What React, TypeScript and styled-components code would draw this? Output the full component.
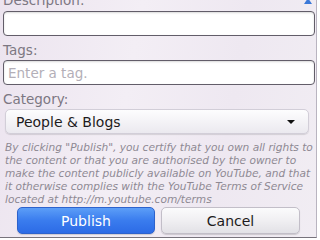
import React from "react";
import styled, { createGlobalStyle } from "styled-components";

const GlobalStyle = createGlobalStyle`
  html, body {
    margin: 0;
    padding: 0;
    background: #ffffff;
  }
  body {
    font-family: "DejaVu Sans", "Liberation Sans", sans-serif;
  }
`;

const Screen = styled.div`
  position: relative;
  width: 316px;
  height: 237px;
  overflow: hidden;
  background: linear-gradient(100deg, #ece4ef 0%, #f3eef5 40%, #eee8f1 70%, #f1edf3 100%);
  border-right: 1px solid #b9b4c0;
  border-bottom: 1px solid #77737c;
`;

const ScrollArrow = styled.div`
  position: absolute;
  top: -2px;
  right: 4px;
  width: 0;
  height: 0;
  border-left: 4px solid transparent;
  border-right: 4px solid transparent;
  border-bottom: 6px solid #3a78d8;
`;

const Form = styled.div`
  display: flex;
  flex-direction: column;
  padding: 0 1px 0 3px;
`;

const Label = styled.div<{ $first?: boolean }>`
  margin-top: ${({ $first }) => ($first ? "-8px" : "6px")};
  margin-bottom: ${({ $first }) => ($first ? "3px" : "2px")};
  font-size: 13.5px;
  line-height: 16px;
  color: #7c7782;
`;

const TextInput = styled.div`
  height: 23px;
  box-sizing: content-box;
  border: 1px solid #625d69;
  border-radius: 4px;
  background: #ffffff;
  box-shadow: inset 0 1px 2px rgba(0, 0, 0, 0.15);
  padding: 0 4px;
  font-size: 13.5px;
  line-height: 24px;
  color: #b3afb8;
`;

const Select = styled.div`
  margin: 0 6px 0 2px;
  height: 23px;
  box-sizing: content-box;
  display: flex;
  align-items: center;
  justify-content: space-between;
  padding: 0 13px 0 10px;
  border: 1px solid #d2ced8;
  border-radius: 5px;
  background: linear-gradient(#fdfdfe, #ebe9ef);
  box-shadow: 0 1px 1px rgba(0, 0, 0, 0.12);
  font-size: 14px;
  color: #1d1b20;
`;

const Caret = styled.span`
  width: 0;
  height: 0;
  border-left: 4px solid transparent;
  border-right: 4px solid transparent;
  border-top: 4px solid #111111;
`;

const Disclaimer = styled.p`
  margin: 7px 0 1px 2px;
  font-size: 10.6px;
  line-height: 13px;
  font-style: italic;
  color: #8e8993;
  white-space: nowrap;
`;

const Buttons = styled.div`
  display: flex;
  gap: 6px;
  padding-left: 14px;
`;

const Button = styled.div<{ $primary?: boolean }>`
  width: ${({ $primary }) => ($primary ? "136px" : "137px")};
  height: 25px;
  box-sizing: content-box;
  display: flex;
  align-items: center;
  justify-content: center;
  border-radius: 5px;
  font-size: 14px;
  border: 1px solid ${({ $primary }) => ($primary ? "#2d62cc" : "#c2bec8")};
  background: ${({ $primary }) =>
    $primary
      ? "linear-gradient(#5c9ef7, #3a7cee 50%, #2c6be6)"
      : "linear-gradient(#fbfbfc, #f0eff2 50%, #e2e1e6)"};
  color: ${({ $primary }) => ($primary ? "#ffffff" : "#1d1b20")};
  box-shadow: 0 1px 1px rgba(0, 0, 0, 0.15);
`;

const lines = [
  "By clicking \"Publish\", you certify that you own all rights to",
  "the content or that you are authorised by the owner to",
  "make the content publicly available on YouTube, and that",
  "it otherwise complies with the YouTube Terms of Service",
  "located at http://m.youtube.com/terms",
];

export default function App() {
  return (
    <>
      <GlobalStyle />
      <Screen>
        <ScrollArrow />
        <Form>
          <Label $first>Description:</Label>
          <TextInput />
          <Label>Tags:</Label>
          <TextInput>Enter a tag.</TextInput>
          <Label>Category:</Label>
          <Select>
            <span>People &amp; Blogs</span>
            <Caret />
          </Select>
          <Disclaimer>
            {lines.map((l, i) => (
              <React.Fragment key={i}>
                {l}
                {i < lines.length - 1 && <br />}
              </React.Fragment>
            ))}
          </Disclaimer>
          <Buttons>
            <Button $primary>Publish</Button>
            <Button>Cancel</Button>
          </Buttons>
        </Form>
      </Screen>
    </>
  );
}
